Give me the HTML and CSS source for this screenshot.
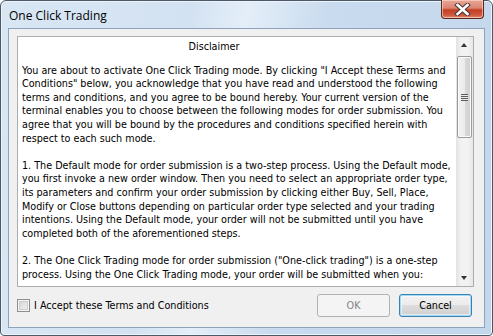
FILE: index.html
```html
<!DOCTYPE html>
<html lang="en">
<head>
  <meta charset="UTF-8">
  <title>One Click Trading</title>
  <link rel="stylesheet" href="styles.css">
</head>
<body>

  <div class="window">
    <div class="title-bar">
      <div class="title">One Click Trading</div>
      <button class="close-btn" aria-label="Close">
        <svg width="17" height="13" viewBox="0 0 17 13">
          <path d="M3.5 2 L13.5 11 M13.5 2 L3.5 11" stroke="#4a3a38" stroke-width="4.6" stroke-linecap="square" fill="none"/>
          <path d="M3.5 2 L13.5 11 M13.5 2 L3.5 11" stroke="#ffffff" stroke-width="2.6" stroke-linecap="square" fill="none"/>
        </svg>
      </button>
    </div>

    <div class="client">
      <div class="text-box">
        <div class="text">
          <p class="heading">Disclaimer</p>
          <p>You are about to activate One Click Trading mode. By clicking "I Accept these Terms and<br>
            Conditions" below, you acknowledge that you have read and understood the following<br>
            terms and conditions, and you agree to be bound hereby. Your current version of the<br>
            terminal enables you to choose between the following modes for order submission. You<br>
            agree that you will be bound by the procedures and conditions specified herein with<br>
            respect to each such mode.</p>
          <p>1. The Default mode for order submission is a two-step process. Using the Default mode,<br>
            you first invoke a new order window. Then you need to select an appropriate order type,<br>
            its parameters and confirm your order submission by clicking either Buy, Sell, Place,<br>
            Modify or Close buttons depending on particular order type selected and your trading<br>
            intentions. Using the Default mode, your order will not be submitted until you have<br>
            completed both of the aforementioned steps.</p>
          <p>2. The One Click Trading mode for order submission ("One-click trading") is a one-step<br>
            process. Using the One Click Trading mode, your order will be submitted when you:</p>
        </div>
        <div class="scrollbar">
          <div class="arrow up"></div>
          <div class="track">
            <div class="thumb"><span class="grip"></span></div>
          </div>
          <div class="arrow down"></div>
        </div>
      </div>

      <div class="footer">
        <label class="accept">
          <span class="checkbox"></span>
          I Accept these Terms and Conditions
        </label>
        <div class="buttons">
          <button class="btn" disabled>OK</button>
          <button class="btn default">Cancel</button>
        </div>
      </div>
    </div>
  </div>

</body>
</html>
```

FILE: styles.css
```css
body, html {
  margin: 0;
  padding: 0;
  background: #ffffff;
  font-family: "Liberation Sans", Arial, sans-serif;
}

.window {
  box-sizing: border-box;
  width: 493px;
  height: 336px;
  display: flex;
  flex-direction: column;
  padding: 0 7px 7px 7px;
  border: 1px solid #4b5868;
  border-radius: 6px 6px 4px 4px;
  background: linear-gradient(100deg, #d9e6f4 0%, #d3e2f2 35%, #e4eef9 45%, #c9dbee 60%, #c3d7ec 100%);
  box-shadow: inset 0 0 0 1px #eef4fb;
}

.title-bar {
  height: 27px;
  display: flex;
  align-items: center;
  justify-content: space-between;
}

.title {
  font-family: "Open Sans", "Liberation Sans", sans-serif;
  font-size: 12px;
  color: #000;
  padding-left: 1px;
  padding-top: 1px;
}

.close-btn {
  align-self: flex-start;
  margin-top: -1px;
  margin-right: 1px;
  width: 43px;
  height: 19px;
  padding: 0;
  border: 1px solid #5a2a22;
  border-top: none;
  border-radius: 0 0 4px 4px;
  background: linear-gradient(#e9a797 0%, #dc8470 45%, #c33f25 55%, #cf5a3e 85%, #e19177 100%);
  box-shadow: inset 0 0 0 1px rgba(255, 220, 210, 0.6);
  display: flex;
  align-items: center;
  justify-content: center;
}

.client {
  flex: 1;
  display: flex;
  flex-direction: column;
  background: #f0f0f0;
  border: 1px solid #8da3bb;
  padding: 7px 10px 0 8px;
}

.text-box {
  height: 251px;
  box-sizing: border-box;
  border: 1px solid #abadb3;
  background: #ffffff;
  display: flex;
  overflow: hidden;
}

.text {
  flex: 1;
  padding: 3px 4px 0 4px;
  font-family: "DejaVu Sans Condensed", "Liberation Sans", sans-serif;
  font-stretch: condensed;
  font-size: 10.7px;
  line-height: 13.6px;
  color: #000;
  overflow: hidden;
  white-space: nowrap;
}

.text p {
  margin: 0 0 13.6px 0;
}

.heading {
  text-align: center;
  padding-right: 46px;
  margin-bottom: 10px !important;
}

.scrollbar {
  width: 17px;
  display: flex;
  flex-direction: column;
  background: linear-gradient(90deg, #e3e3e3, #f2f2f2 30%, #f2f2f2 70%, #e6e6e6);
}

.arrow {
  height: 17px;
  position: relative;
}

.arrow::after {
  content: "";
  position: absolute;
  left: 5px;
  width: 0;
  height: 0;
  border-left: 3.5px solid transparent;
  border-right: 3.5px solid transparent;
}

.arrow.up::after {
  top: 6px;
  border-bottom: 4px solid #333;
}

.arrow.down::after {
  top: 7px;
  border-top: 4px solid #333;
}

.track {
  flex: 1;
  padding: 2px 1px 0 1px;
}

.thumb {
  height: 82px;
  box-sizing: border-box;
  border: 1px solid #9a9a9a;
  border-radius: 2px;
  background: linear-gradient(90deg, #f2f2f2, #ebebeb 50%, #d8d8d8 55%, #cfcfcf);
  box-shadow: inset 0 0 0 1px #fafafa;
  display: flex;
  align-items: center;
  justify-content: center;
}

.grip {
  width: 7px;
  height: 7px;
  background: repeating-linear-gradient(#5d5d5d 0 1px, #e8e8e8 1px 2px);
}

.footer {
  flex: 1;
  display: flex;
  align-items: center;
  justify-content: space-between;
  padding-bottom: 4px;
}

.accept {
  display: flex;
  align-items: center;
  gap: 4px;
  font-family: "DejaVu Sans Condensed", "Liberation Sans", sans-serif;
  font-stretch: condensed;
  font-size: 10.7px;
  color: #000;
}

.checkbox {
  width: 11px;
  height: 11px;
  border: 1px solid #8e8f8f;
  background: linear-gradient(135deg, #d2d2d2, #f4f4f4);
  box-shadow: inset 0 0 0 1px #f4f4f4, inset 0 0 0 2px #cfcfcf;
}

.buttons {
  display: flex;
  gap: 9px;
  padding-right: 2px;
}

.btn {
  width: 73px;
  height: 23px;
  font-family: "DejaVu Sans Condensed", "Liberation Sans", sans-serif;
  font-stretch: condensed;
  font-size: 10.7px;
  border-radius: 3px;
  padding: 0;
  color: #000;
  border: 1px solid #707070;
  background: linear-gradient(#f2f2f2 0%, #ebebeb 50%, #dddddd 50%, #cfcfcf 100%);
  box-shadow: inset 0 0 0 1px #fcfcfc;
}

.btn:disabled {
  color: #838383;
  border-color: #adb2b5;
  background: #f4f4f4;
  box-shadow: none;
}

.btn.default {
  border-color: #3c7fb1;
  box-shadow: inset 0 0 0 1px #9fdcf7, inset 0 0 0 2px rgba(255, 255, 255, 0.5);
}
```
